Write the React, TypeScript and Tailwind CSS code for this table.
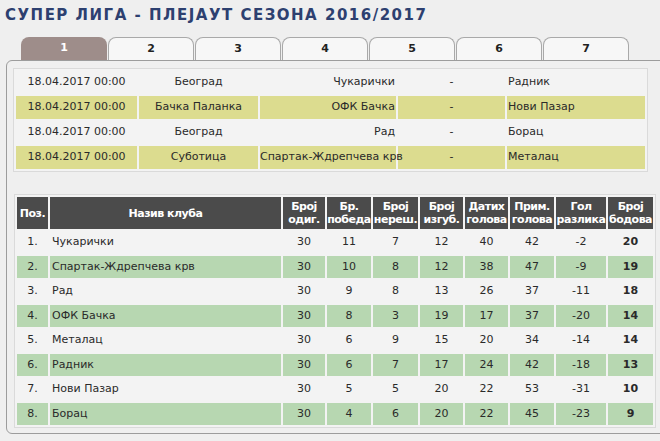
const tabs = ["1", "2", "3", "4", "5", "6", "7"];

const fixtures = [
  { date: "18.04.2017 00:00", city: "Београд", home: "Чукарички", away: "Радник" },
  { date: "18.04.2017 00:00", city: "Бачка Паланка", home: "ОФК Бачка", away: "Нови Пазар" },
  { date: "18.04.2017 00:00", city: "Београд", home: "Рад", away: "Борац" },
  { date: "18.04.2017 00:00", city: "Суботица", home: "Спартак-Ждрепчева крв", away: "Металац" },
];

const fixtureCols = ["w-[121px]", "w-[119px]", "w-[136px]", "w-[107px]", "w-[138px]"];

const headers = [
  { a: "Поз.", b: "", w: "w-[31px]" },
  { a: "Назив клуба", b: "", w: "w-[231px]" },
  { a: "Број", b: "одиг.", w: "w-[42px]" },
  { a: "Бр.", b: "победа", w: "w-[44px]" },
  { a: "Број", b: "нереш.", w: "w-[45px]" },
  { a: "Број", b: "изгуб.", w: "w-[43px]" },
  { a: "Датих", b: "голова", w: "w-[43px]" },
  { a: "Прим.", b: "голова", w: "w-[44px]" },
  { a: "Гол", b: "разлика", w: "w-[50px]" },
  { a: "Број", b: "бодова", w: "w-[45px]" },
];

const standings: [string, string, number, number, number, number, number, number, number, number][] = [
  ["1.", "Чукарички", 30, 11, 7, 12, 40, 42, -2, 20],
  ["2.", "Спартак-Ждрепчева крв", 30, 10, 8, 12, 38, 47, -9, 19],
  ["3.", "Рад", 30, 9, 8, 13, 26, 37, -11, 18],
  ["4.", "ОФК Бачка", 30, 8, 3, 19, 17, 37, -20, 14],
  ["5.", "Металац", 30, 6, 9, 15, 20, 34, -14, 14],
  ["6.", "Радник", 30, 6, 7, 17, 24, 42, -18, 13],
  ["7.", "Нови Пазар", 30, 5, 5, 20, 22, 53, -31, 10],
  ["8.", "Борац", 30, 4, 6, 20, 22, 45, -23, 9],
];

export default function App() {
  return (
    <div className="w-[660px] h-[441px] overflow-hidden bg-[#efefef] font-['DejaVu_Sans',sans-serif] text-[11px] text-[#2a2a2a]">
      <h1 className="pl-[5px] pt-[5px] leading-[20px] text-[15px] font-bold tracking-[1.5px] text-[#2d4070] whitespace-nowrap">
        СУПЕР ЛИГА - ПЛЕЈАУТ СЕЗОНА 2016/2017
      </h1>

      <div className="mt-[12px] ml-[21px] flex gap-px">
        {tabs.map((t, i) => (
          <div
            key={t}
            className={
              i === 0
                ? "w-[86px] h-[23px] flex items-center justify-center rounded-t-[8px] bg-[#9e8d8a] text-white font-bold"
                : "w-[86px] h-[23px] flex items-center justify-center rounded-t-[8px] border border-b-0 border-[#a9a9a9] bg-[#f7f7f7] text-[#222] font-bold"
            }
          >
            {t}
          </div>
        ))}
      </div>

      <div className="ml-[6px] w-[700px] h-[374px] rounded-[6px] border border-[#9c9c9c] pt-[7px] pl-[6px]">
        <table className="table-fixed border-separate border-spacing-[2px] border border-[#dadada] bg-[#f3f3f3] w-[635px]">
          <tbody>
            {fixtures.map((f, i) => {
              const bg = i % 2 === 1 ? "bg-[#dcdc8f]" : "";
              return (
                <tr key={i} className="h-[23px] whitespace-nowrap">
                  <td className={`${fixtureCols[0]} p-0 text-center ${bg}`}>{f.date}</td>
                  <td className={`${fixtureCols[1]} p-0 text-center ${bg}`}>{f.city}</td>
                  <td className={`${fixtureCols[2]} p-0 pr-[1px] text-right ${bg}`}>{f.home}</td>
                  <td className={`${fixtureCols[3]} p-0 text-center ${bg}`}>-</td>
                  <td className={`${fixtureCols[4]} p-0 pl-[1px] text-left ${bg}`}>{f.away}</td>
                </tr>
              );
            })}
          </tbody>
        </table>

        <table className="table-fixed mt-[22px] ml-[1px] border-separate border-spacing-[2px] border border-[#dadada] bg-[#f3f3f3] w-[642px]">
          <thead>
            <tr className="h-[32px]">
              {headers.map((h, i) => (
                <th
                  key={i}
                  className={`${h.w} p-0 bg-[#4b4b4b] text-white font-bold leading-[13px] tracking-[-0.5px] text-center whitespace-nowrap`}
                >
                  {h.a}
                  {h.b && <br />}
                  {h.b}
                </th>
              ))}
            </tr>
          </thead>
          <tbody>
            {standings.map((r, i) => {
              const bg = i % 2 === 1 ? "bg-[#b7d7b1]" : "";
              return (
                <tr key={i} className="h-[22.5px] whitespace-nowrap">
                  {r.map((c, j) => (
                    <td
                      key={j}
                      className={`p-0 ${bg} ${j === 1 ? "text-left pl-[2px]" : "text-center"} ${j === 9 ? "font-bold" : ""}`}
                    >
                      {c}
                    </td>
                  ))}
                </tr>
              );
            })}
          </tbody>
        </table>
      </div>
    </div>
  );
}
